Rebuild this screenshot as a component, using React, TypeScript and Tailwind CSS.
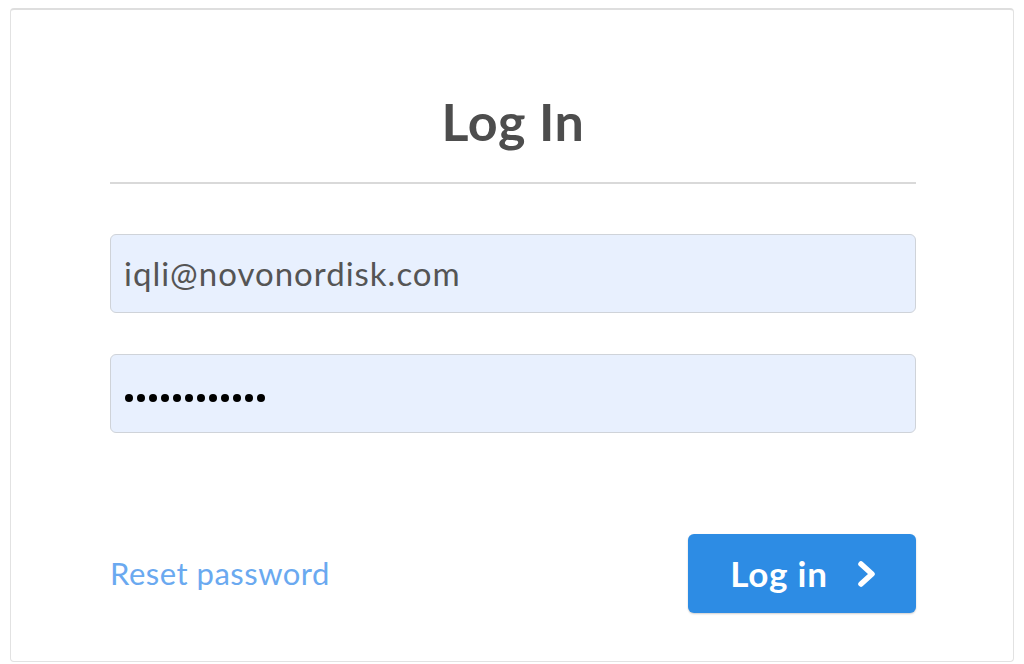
import React from "react";

export default function App() {
  return (
    <div className="w-[1024px] h-[664px] bg-white pt-[8px] pl-[10px] pr-[10px] font-['Lato',sans-serif]">
      <div className="h-[654px] rounded-[4px] border border-[#e2e2e2] border-t-2 border-t-[#dedede] bg-white px-[99px] pr-[97px] pt-[85px]">
        <h1 className="text-center text-[52px] leading-[52px] tracking-[0.5px] font-bold text-[#4d4d4d]">Log In</h1>
        <div className="mt-[35px] h-[2px] bg-[#d9d9d9]" />
        <div className="mt-[50px] flex h-[79px] items-center rounded-[6px] border border-[#cfd3d9] bg-[#e8f0fe] pl-[13px] text-[33px] tracking-[1px] text-[#555555]">
          iqli@novonordisk.com
        </div>
        <div className="mt-[41px] flex h-[79px] items-center rounded-[6px] border border-[#cfd3d9] bg-[#e8f0fe] pl-[14px] pt-[9px]">
          <div className="flex gap-[4px]">
            {Array.from({ length: 12 }).map((_, i) => (
              <span key={i} className="block h-[8px] w-[8px] rounded-full bg-black" />
            ))}
          </div>
        </div>
        <div className="mt-[101px] flex items-center justify-between">
          <a className="text-[31px] tracking-[0.5px] text-[#6aa9f0]">Reset password</a>
          <button className="flex h-[79px] w-[228px] items-center justify-center gap-[28px] rounded-[6px] bg-[#2d8ce4] pl-[4px] text-[35px] tracking-[0.8px] font-bold text-white shadow-[0_1px_2px_rgba(0,0,0,0.2)]">
            <span>Log in</span>
            <svg width="22" height="28" viewBox="0 0 22 28" fill="none">
              <path d="M5 4 L16 14 L5 24" stroke="#fff" strokeWidth="5.5" strokeLinecap="round" strokeLinejoin="round" />
            </svg>
          </button>
        </div>
      </div>
    </div>
  );
}
